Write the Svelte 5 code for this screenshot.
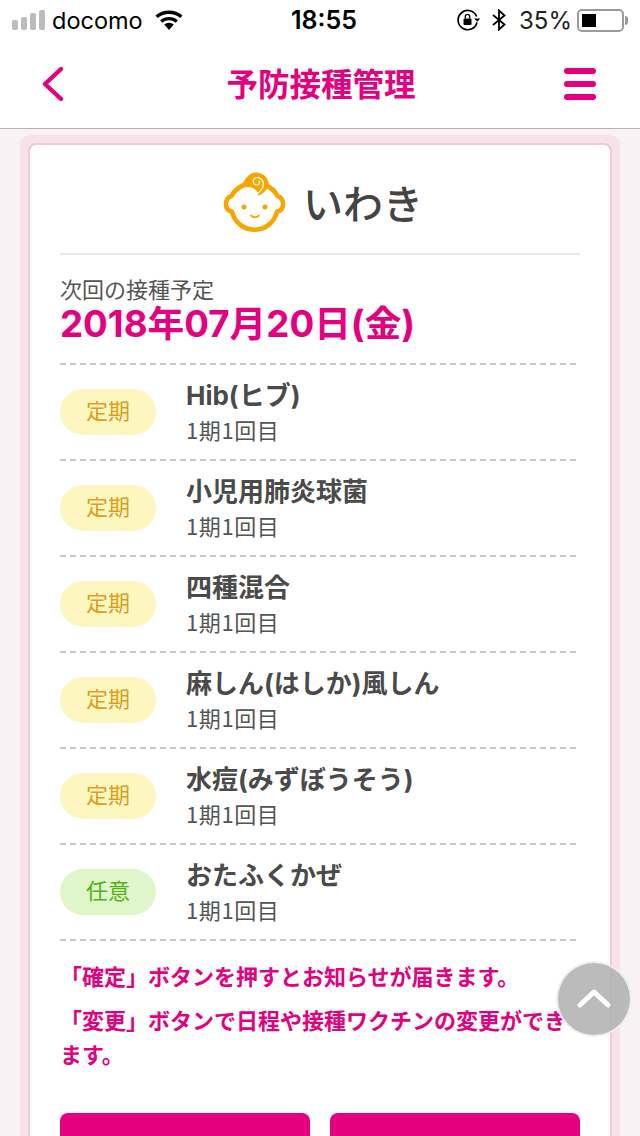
<script lang="ts">
  const vaccines = [
    { kind: "teiki", tag: "定期", name: "Hib(ヒブ)", dose: "1期1回目" },
    { kind: "teiki", tag: "定期", name: "小児用肺炎球菌", dose: "1期1回目" },
    { kind: "teiki", tag: "定期", name: "四種混合", dose: "1期1回目" },
    { kind: "teiki", tag: "定期", name: "麻しん(はしか)風しん", dose: "1期1回目" },
    { kind: "teiki", tag: "定期", name: "水痘(みずぼうそう)", dose: "1期1回目" },
    { kind: "nini", tag: "任意", name: "おたふくかぜ", dose: "1期1回目" },
  ];
</script>

<div class="page">
  <div class="status">
    <div class="side">
      <span class="signal"><i></i><i></i><i></i><i></i></span>
      <span class="carrier">docomo</span>
      <svg class="wifi" width="28" height="20" viewBox="0 0 28 20" aria-hidden="true">
        <path d="M14 20 L9.2 14.6 A7.4 7.4 0 0 1 18.8 14.6 Z" fill="#000" />
        <path d="M6.2 11.6 A12 12 0 0 1 21.8 11.6" fill="none" stroke="#000" stroke-width="3.2" />
        <path d="M1.6 6.8 A19 19 0 0 1 26.4 6.8" fill="none" stroke="#000" stroke-width="3.4" />
      </svg>
    </div>
    <span class="time">18:55</span>
    <div class="side right">
      <svg width="24" height="22" viewBox="0 0 24 22" aria-hidden="true">
        <path d="M20 13.5 A9.6 9.6 0 1 1 19.6 7.5" fill="none" stroke="#000" stroke-width="1.7" />
        <path d="M17.2 9.5 h6 l-3 3.2 Z" fill="#000" />
        <rect x="6.5" y="9.5" width="8" height="6.5" rx="1" fill="#000" />
        <path d="M8.3 9.5 V7.6 a2.2 2.2 0 0 1 4.4 0 V9.5" fill="none" stroke="#000" stroke-width="1.4" />
      </svg>
      <svg class="bt" width="16" height="22" viewBox="0 0 16 22" aria-hidden="true">
        <path d="M2 6 L13.5 15.5 L8 20.5 V1.5 L13.5 6.5 L2 16" fill="none" stroke="#000" stroke-width="1.8" />
      </svg>
      <span class="pct">35%</span>
      <span class="battery"><span class="level"></span></span>
      <span class="nub"></span>
    </div>
  </div>

  <header class="nav">
    <svg class="back" width="24" height="36" viewBox="0 0 24 36" aria-hidden="true">
      <path d="M21 3 L5 18 L21 33" fill="none" stroke="#e4007f" stroke-width="4.4" stroke-linecap="round" stroke-linejoin="round" />
    </svg>
    <h1>予防接種管理</h1>
    <div class="burger"><i></i><i></i><i></i></div>
  </header>

  <main class="frame">
    <section class="card">
      <div class="child">
        <svg width="64" height="60" viewBox="0 0 64 60" aria-hidden="true">
          <path d="M8.5 24 C4.500 25 3 29 3 32 C3 36 5 39 9 39.500 A23 23 0 0 0 54 39.500 C58 39 60 36 60 32 C60 29 58.500 25 54.500 24 A24 24 0 0 0 42 13 L21 13 A24 24 0 0 0 8.500 24 Z" fill="#fff" stroke="#f8a500" stroke-width="4.600" stroke-linejoin="round" />
          <path d="M19 15 C21 6 27 0.500 33 0.500 C40 0.500 45.500 6 45.500 11.500 C45.500 17 41 21 35 24 C36 20 33 18 30 16 C27 14 23 13.500 19 15 Z" fill="#f8a500" />
          <path d="M35 21 C39 18 41 14 40 10 C39 6 34 4 31 7 C29 10 31 13 34 13 C36 13 37 11 36 9" fill="none" stroke="#fff" stroke-width="1.200" stroke-linecap="round" />
          <circle cx="21" cy="35" r="2.500" fill="#f8a500" />
          <circle cx="42" cy="35" r="2.500" fill="#f8a500" />
          <path d="M28 43.500 Q32 47 36 43.500" fill="none" stroke="#f8a500" stroke-width="1.700" stroke-linecap="round" />
        </svg>
        <span class="child-name">いわき</span>
      </div>

      <div class="next">
        <div class="next-label">次回の接種予定</div>
        <div class="next-date">2018年07月20日(金)</div>
      </div>

      <ul class="list">
        {#each vaccines as v}
          <li class="row">
            <span class="tag {v.kind}">{v.tag}</span>
            <div class="info">
              <div class="name">{v.name}</div>
              <div class="dose">{v.dose}</div>
            </div>
          </li>
        {/each}
      </ul>

      <p class="note first">「確定」ボタンを押すとお知らせが届きます。</p>
      <p class="note">「変更」ボタンで日程や接種ワクチンの変更ができます。</p>

      <div class="actions">
        <button type="button" aria-label="確定"></button>
        <button type="button" aria-label="変更"></button>
      </div>
    </section>
  </main>

  <button class="top" type="button" aria-label="ページトップへ">
    <svg width="36" height="22" viewBox="0 0 36 22" aria-hidden="true">
      <path d="M4 18 L18 5 L32 18" fill="none" stroke="#fff" stroke-width="5" stroke-linecap="round" stroke-linejoin="round" />
    </svg>
  </button>
</div>

<style>
  :global(body) {
    margin: 0;
    background: #f8f2f4;
  }
  .page {
    position: relative;
    width: 640px;
    height: 1136px;
    overflow: hidden;
    background: #f8f2f4;
    font-family: Inter, "Noto Sans CJK JP", sans-serif;
    color: #444;
  }
  .status {
    display: flex;
    align-items: center;
    justify-content: space-between;
    height: 40px;
    padding: 0 12px;
    background: #fff;
    color: #000;
    font-size: 24px;
  }
  .side {
    display: flex;
    align-items: center;
    width: 220px;
  }
  .side.right {
    justify-content: flex-end;
  }
  .signal {
    display: flex;
    align-items: flex-end;
    gap: 3px;
    height: 20px;
    margin-right: 7px;
  }
  .signal i {
    display: block;
    width: 6px;
    border-radius: 2px;
    background: #bcbcbc;
  }
  .signal i:nth-child(1) { height: 10px; }
  .signal i:nth-child(2) { height: 13px; }
  .signal i:nth-child(3) { height: 17px; }
  .signal i:nth-child(4) { height: 20px; }
  .carrier {
    font-size: 23.5px;
  }
  .wifi {
    margin-left: 12px;
  }
  .time {
    margin-left: 8px;
    font-size: 25px;
    font-weight: 600;
  }
  .bt {
    margin-left: 10px;
  }
  .pct {
    margin-left: 12px;
    color: #222;
  }
  .battery {
    box-sizing: border-box;
    display: block;
    width: 47px;
    height: 23px;
    margin-left: 5px;
    padding: 3px;
    border: 2px solid #9a9a9a;
    border-radius: 5px;
  }
  .level {
    display: block;
    width: 14px;
    height: 13px;
    background: #000;
  }
  .nub {
    width: 3px;
    height: 9px;
    margin-left: 1px;
    background: #9a9a9a;
    border-radius: 0 3px 3px 0;
  }
  .nav {
    display: flex;
    align-items: center;
    justify-content: space-between;
    box-sizing: border-box;
    height: 89px;
    padding: 0 44px 0 40px;
    background: #fff;
    border-bottom: 1px solid #b7b1b3;
  }
  .back {
    margin-right: 14px;
  }
  .nav h1 {
    margin: 2px 0 0;
    font-size: 31.5px;
    font-weight: 700;
    color: #e4007f;
    line-height: 1;
  }
  .burger {
    display: flex;
    flex-direction: column;
    gap: 7px;
    width: 32px;
  }
  .burger i {
    display: block;
    height: 6px;
    border-radius: 3px;
    background: #e4007f;
  }
  .frame {
    box-sizing: border-box;
    width: 600px;
    margin: 6px 20px 0;
    padding: 8px;
    background: #f8e2ea;
    border-radius: 10px 10px 0 0;
  }
  .card {
    box-sizing: border-box;
    padding: 0 30px;
    background: #fff;
    border: 2px solid #f6c9d9;
    border-radius: 8px;
  }
  .child {
    display: flex;
    align-items: center;
    justify-content: center;
    gap: 16px;
    box-sizing: border-box;
    height: 110px;
    padding: 6px 0 0 6px;
    border-bottom: 2px solid #e8e8e8;
  }
  .child-name {
    margin-top: 6px;
    font-size: 40px;
    font-weight: 500;
    color: #444;
    line-height: 1;
  }
  .next {
    padding: 22px 0 18px;
  }
  .next-label {
    font-size: 22px;
    line-height: 26px;
    color: #555;
  }
  .next-date {
    font-size: 36.7px;
    font-weight: 700;
    line-height: 42px;
    color: #e4007f;
  }
  .list {
    list-style: none;
    margin: 0;
    padding: 2px 0 0;
    background: repeating-linear-gradient(90deg, #c6c6c6 0 6px, transparent 6px 10px) top / 100% 2px no-repeat;
  }
  .row {
    display: flex;
    align-items: center;
    box-sizing: border-box;
    height: 96px;
    padding-bottom: 2px;
    background: repeating-linear-gradient(90deg, #c6c6c6 0 6px, transparent 6px 10px) bottom / 100% 2px no-repeat;
  }
  .tag {
    display: flex;
    align-items: center;
    justify-content: center;
    box-sizing: border-box;
    width: 96px;
    height: 46px;
    padding-bottom: 6px;
    border-radius: 23px;
    font-size: 22px;
  }
  .tag.teiki {
    background: #fdf6bf;
    color: #dc9e1c;
  }
  .tag.nini {
    background: #def6c9;
    color: #55b216;
  }
  .info {
    margin-left: 30px;
    margin-top: 2px;
  }
  .name {
    font-size: 26px;
    font-weight: 700;
    line-height: 34px;
    color: #4a4a4a;
  }
  .dose {
    margin-top: -2px;
    font-family: "Noto Sans CJK JP", sans-serif;
    font-size: 22px;
    letter-spacing: 0.6px;
    line-height: 36px;
    color: #555;
  }
  .note {
    margin: 0;
    font-size: 22px;
    font-weight: 700;
    line-height: 34px;
    color: #e4007f;
  }
  .note.first {
    margin-top: 19px;
    margin-bottom: 10px;
  }
  .actions {
    display: flex;
    gap: 20px;
    margin-top: 41px;
  }
  .actions button {
    flex: 1;
    height: 80px;
    border: none;
    border-radius: 8px;
    background: #e4007f;
  }
  .top {
    position: absolute;
    left: 556px;
    top: 961px;
    display: flex;
    align-items: center;
    justify-content: center;
    box-sizing: border-box;
    width: 76px;
    height: 76px;
    padding: 0 0 2px;
    border: 2px solid rgba(255, 255, 255, 0.75);
    border-radius: 50%;
    background: rgba(180, 180, 180, 0.9);
  }
</style>
